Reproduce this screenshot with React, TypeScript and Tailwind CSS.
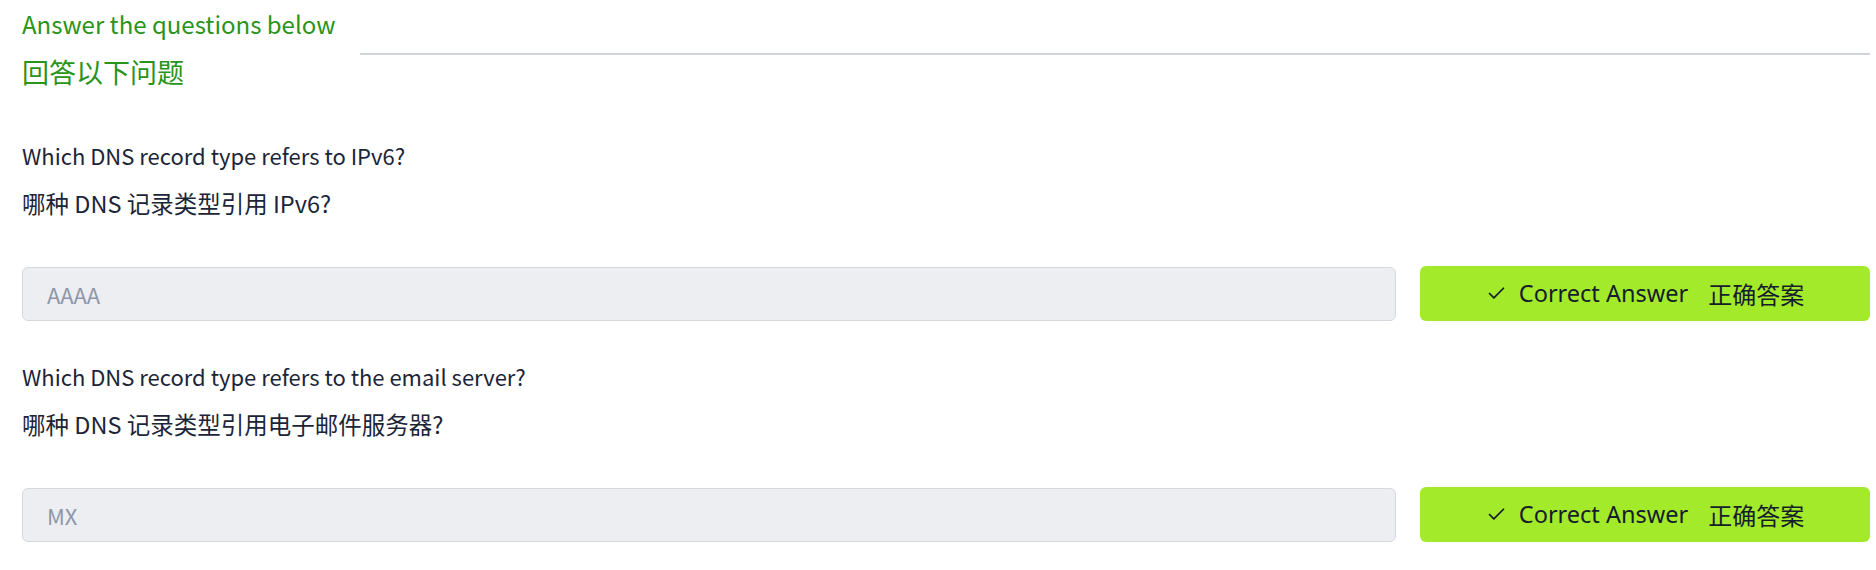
import { Check } from 'lucide-react';

const questions = [
  {
    en: 'Which DNS record type refers to IPv6?',
    zh: '哪种 DNS 记录类型引用 IPv6?',
    answer: 'AAAA',
  },
  {
    en: 'Which DNS record type refers to the email server?',
    zh: '哪种 DNS 记录类型引用电子邮件服务器?',
    answer: 'MX',
  },
];

const sans = "font-['Noto_Sans_CJK_SC','Noto_Sans',sans-serif]";

export default function App() {
  return (
    <div className={`min-h-screen bg-white pl-[22px] pr-[6px] ${sans}`}>
      {/* Header */}
      <div className="flex items-start">
        <div className="text-[#2a9419]">
          <h3 className="pt-[8px] text-[24px] leading-[32px]">Answer the questions below</h3>
          <h3 className="mt-[14px] text-[27px] leading-[36px]">回答以下问题</h3>
        </div>
        <div className="ml-[25px] mt-[53px] flex-1 border-t-2 border-[#d1d5db]" />
      </div>

      {/* Questions */}
      <div className="mt-[51px]">
        {questions.map((q, i) => (
          <div key={i} className={i > 0 ? 'mt-[41px]' : ''}>
            <p className="text-[22px] leading-[28px] text-[#1c2538]">{q.en}</p>
            <p className="mt-[19px] text-[23.5px] leading-[30px] text-[#1c2538]">{q.zh}</p>
            <div className="mt-[48px] flex items-center gap-[24px]">
              <input
                disabled
                placeholder={q.answer}
                className="h-[54px] flex-1 rounded-[6px] border border-[#d5d8de] bg-[#eceef2] px-[24px] text-[22px] text-[#1c2538] placeholder:text-[#8e97aa]"
              />
              <button className="flex h-[55px] w-[450px] items-center justify-center rounded-[6px] bg-[#a3ea2a] text-[#151c2b]">
                <Check size={21} strokeWidth={2} className="mr-[12px]" />
                <span className="font-['Noto_Sans',sans-serif] text-[23.5px]">Correct Answer</span>
                <span className="ml-[20px] font-['Noto_Sans_CJK_SC',sans-serif] text-[24px]">正确答案</span>
              </button>
            </div>
          </div>
        ))}
      </div>
    </div>
  );
}
